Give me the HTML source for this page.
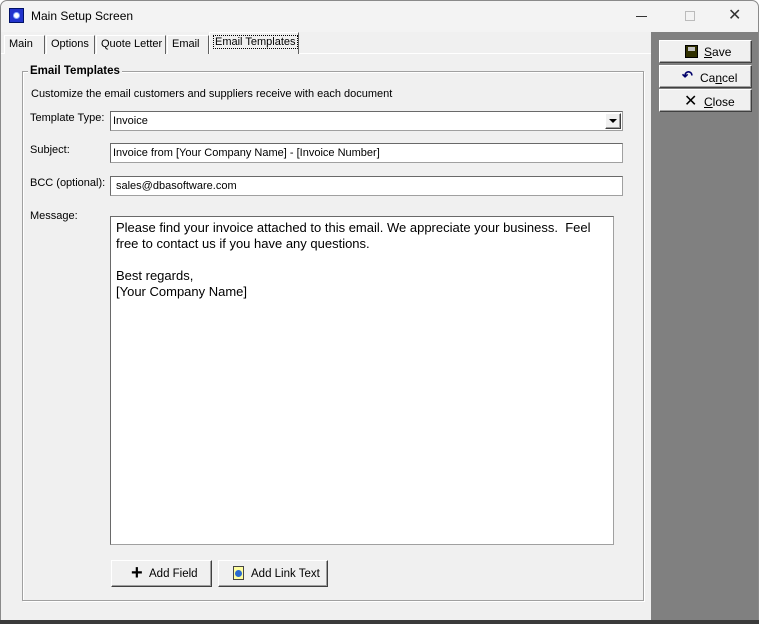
<!DOCTYPE html><html><head><style>
*{box-sizing:border-box}
body{margin:0;width:759px;height:624px;background:#fff;font-family:"Liberation Sans",sans-serif;font-size:11px;color:#000;position:relative;overflow:hidden}
.a{position:absolute;white-space:nowrap}
.win{left:0;top:0;width:759px;height:621px;border:1px solid #8a8a8a;border-radius:7px 7px 0 0;background:#f3f3f3;overflow:hidden}
.tab{top:34px;height:19px;border:1px solid #fff;border-right:1px solid #606060;border-bottom:none;line-height:17px;padding:0 4px;font-size:11px;background:#f0f0f0}
.inp{background:#fff;border:1px solid #a0a0a0;border-top-color:#696969;border-left-color:#696969;height:20px;line-height:18px;padding-left:2px;font-size:11px}
.btn{background:#f0f0f0;border:1px solid;border-color:#fff #404040 #404040 #fff;box-shadow:-1px -1px 0 #a0a0a0 inset;font-size:12px}
.lbl{font-size:11px}
</style></head><body>
<div class="a win">
<div class="a" style="left:8px;top:7px;width:15px;height:15px;background:#2233cc;border:1px solid #001166"><div class="a" style="left:3px;top:3px;width:7px;height:7px;border-radius:50%;background:#fff;border:1px solid #88aaff"></div></div>
<div class="a" style="left:30px;top:8px;font-size:12px">Main Setup Screen</div>
<div class="a" style="left:635px;top:15px;width:11px;height:1px;background:#333"></div>
<div class="a" style="left:684px;top:10px;width:10px;height:10px;border:1px solid #bbb"></div>
<div class="a" style="left:727px;top:4px;font-size:16px;color:#333">✕</div>
<div class="a" style="left:0;top:31px;width:650px;height:590px;background:#f0f0f0"></div>
<div class="a" style="left:650px;top:31px;width:108px;height:590px;background:#808080"></div>
<div class="a" style="left:0;top:52px;width:650px;height:1px;background:#fff"></div>
<div class="a tab" style="left:3px;width:41px">Main</div>
<div class="a tab" style="left:45px;width:49px">Options</div>
<div class="a tab" style="left:95px;width:70px">Quote Letter</div>
<div class="a tab" style="left:166px;width:42px">Email</div>
<div class="a tab" style="left:208px;top:31px;height:22px;width:90px;background:#f0f0f0;padding-top:1px"><span style="outline:1px dotted #000;padding:0 1px">Email Templates</span></div>
<div class="a" style="left:21px;top:70px;width:622px;height:530px;border:1px solid #a0a0a0;box-shadow:1px 1px 0 #fff inset,1px 1px 0 #fff"></div>
<div class="a" style="left:27px;top:64px;background:#f0f0f0;padding:0 2px;font-weight:bold;font-size:11.5px">Email Templates</div>
<div class="a lbl" style="left:30px;top:87px">Customize the email customers and suppliers receive with each document</div>
<div class="a lbl" style="left:29px;top:111px">Template Type:</div>
<div class="a lbl" style="left:29px;top:143px">Subject:</div>
<div class="a lbl" style="left:29px;top:176px">BCC (optional):</div>
<div class="a lbl" style="left:29px;top:209px">Message:</div>
<div class="a inp" style="left:109px;top:110px;width:513px">Invoice</div>
<div class="a btn" style="left:604px;top:112px;width:16px;height:16px"><div class="a" style="left:3px;top:5px;border:4px solid transparent;border-top:4px solid #000;border-bottom:none"></div></div>
<div class="a inp" style="left:109px;top:142px;width:513px">Invoice from [Your Company Name] - [Invoice Number]</div>
<div class="a inp" style="left:109px;top:175px;width:513px;padding-left:5px">sales@dbasoftware.com</div>
<div class="a inp" style="left:109px;top:215px;width:504px;height:329px;line-height:16px;padding:3px 0 0 5px;font-size:13px;white-space:normal">Please find your invoice attached to this email. We appreciate your business.&nbsp; Feel<br>free to contact us if you have any questions.<br><br>Best regards,<br>[Your Company Name]</div>
<div class="a btn" style="left:110px;top:559px;width:101px;height:27px"><div class="a" style="left:19px;top:5px;font-size:20px;font-weight:bold;line-height:14px">+</div><div class="a" style="left:37px;top:7px;font-size:11.5px">Add Field</div></div>
<div class="a btn" style="left:217px;top:559px;width:110px;height:27px"><div class="a" style="left:14px;top:5px;width:11px;height:14px;background:#ffffa0;border:1px solid #444"><div class="a" style="left:1px;top:3px;width:7px;height:7px;border-radius:50%;background:#2a6ad0"></div></div><div class="a" style="left:32px;top:7px;font-size:11.5px">Add Link Text</div></div>
<div class="a btn" style="left:658px;top:39px;width:93px;height:23px"><div class="a" style="left:25px;top:4px;width:13px;height:13px;background:#303000;border:1px solid #000"><div class="a" style="left:2px;top:1px;width:7px;height:4px;background:#c0c0c0"></div></div><div class="a" style="left:44px;top:4px"><u>S</u>ave</div></div>
<div class="a btn" style="left:658px;top:64px;width:93px;height:23px"><div class="a" style="left:22px;top:2px;color:#00006a;font-size:13px;font-weight:bold">↶</div><div class="a" style="left:40px;top:5px">Ca<u>n</u>cel</div></div>
<div class="a btn" style="left:658px;top:88px;width:93px;height:23px"><div class="a" style="left:24px;top:1px;font-size:16px">✕</div><div class="a" style="left:44px;top:5px"><u>C</u>lose</div></div>
</div>
<div class="a" style="left:0;top:620px;width:759px;height:4px;background:#3a3a3a"></div>
</body></html>
